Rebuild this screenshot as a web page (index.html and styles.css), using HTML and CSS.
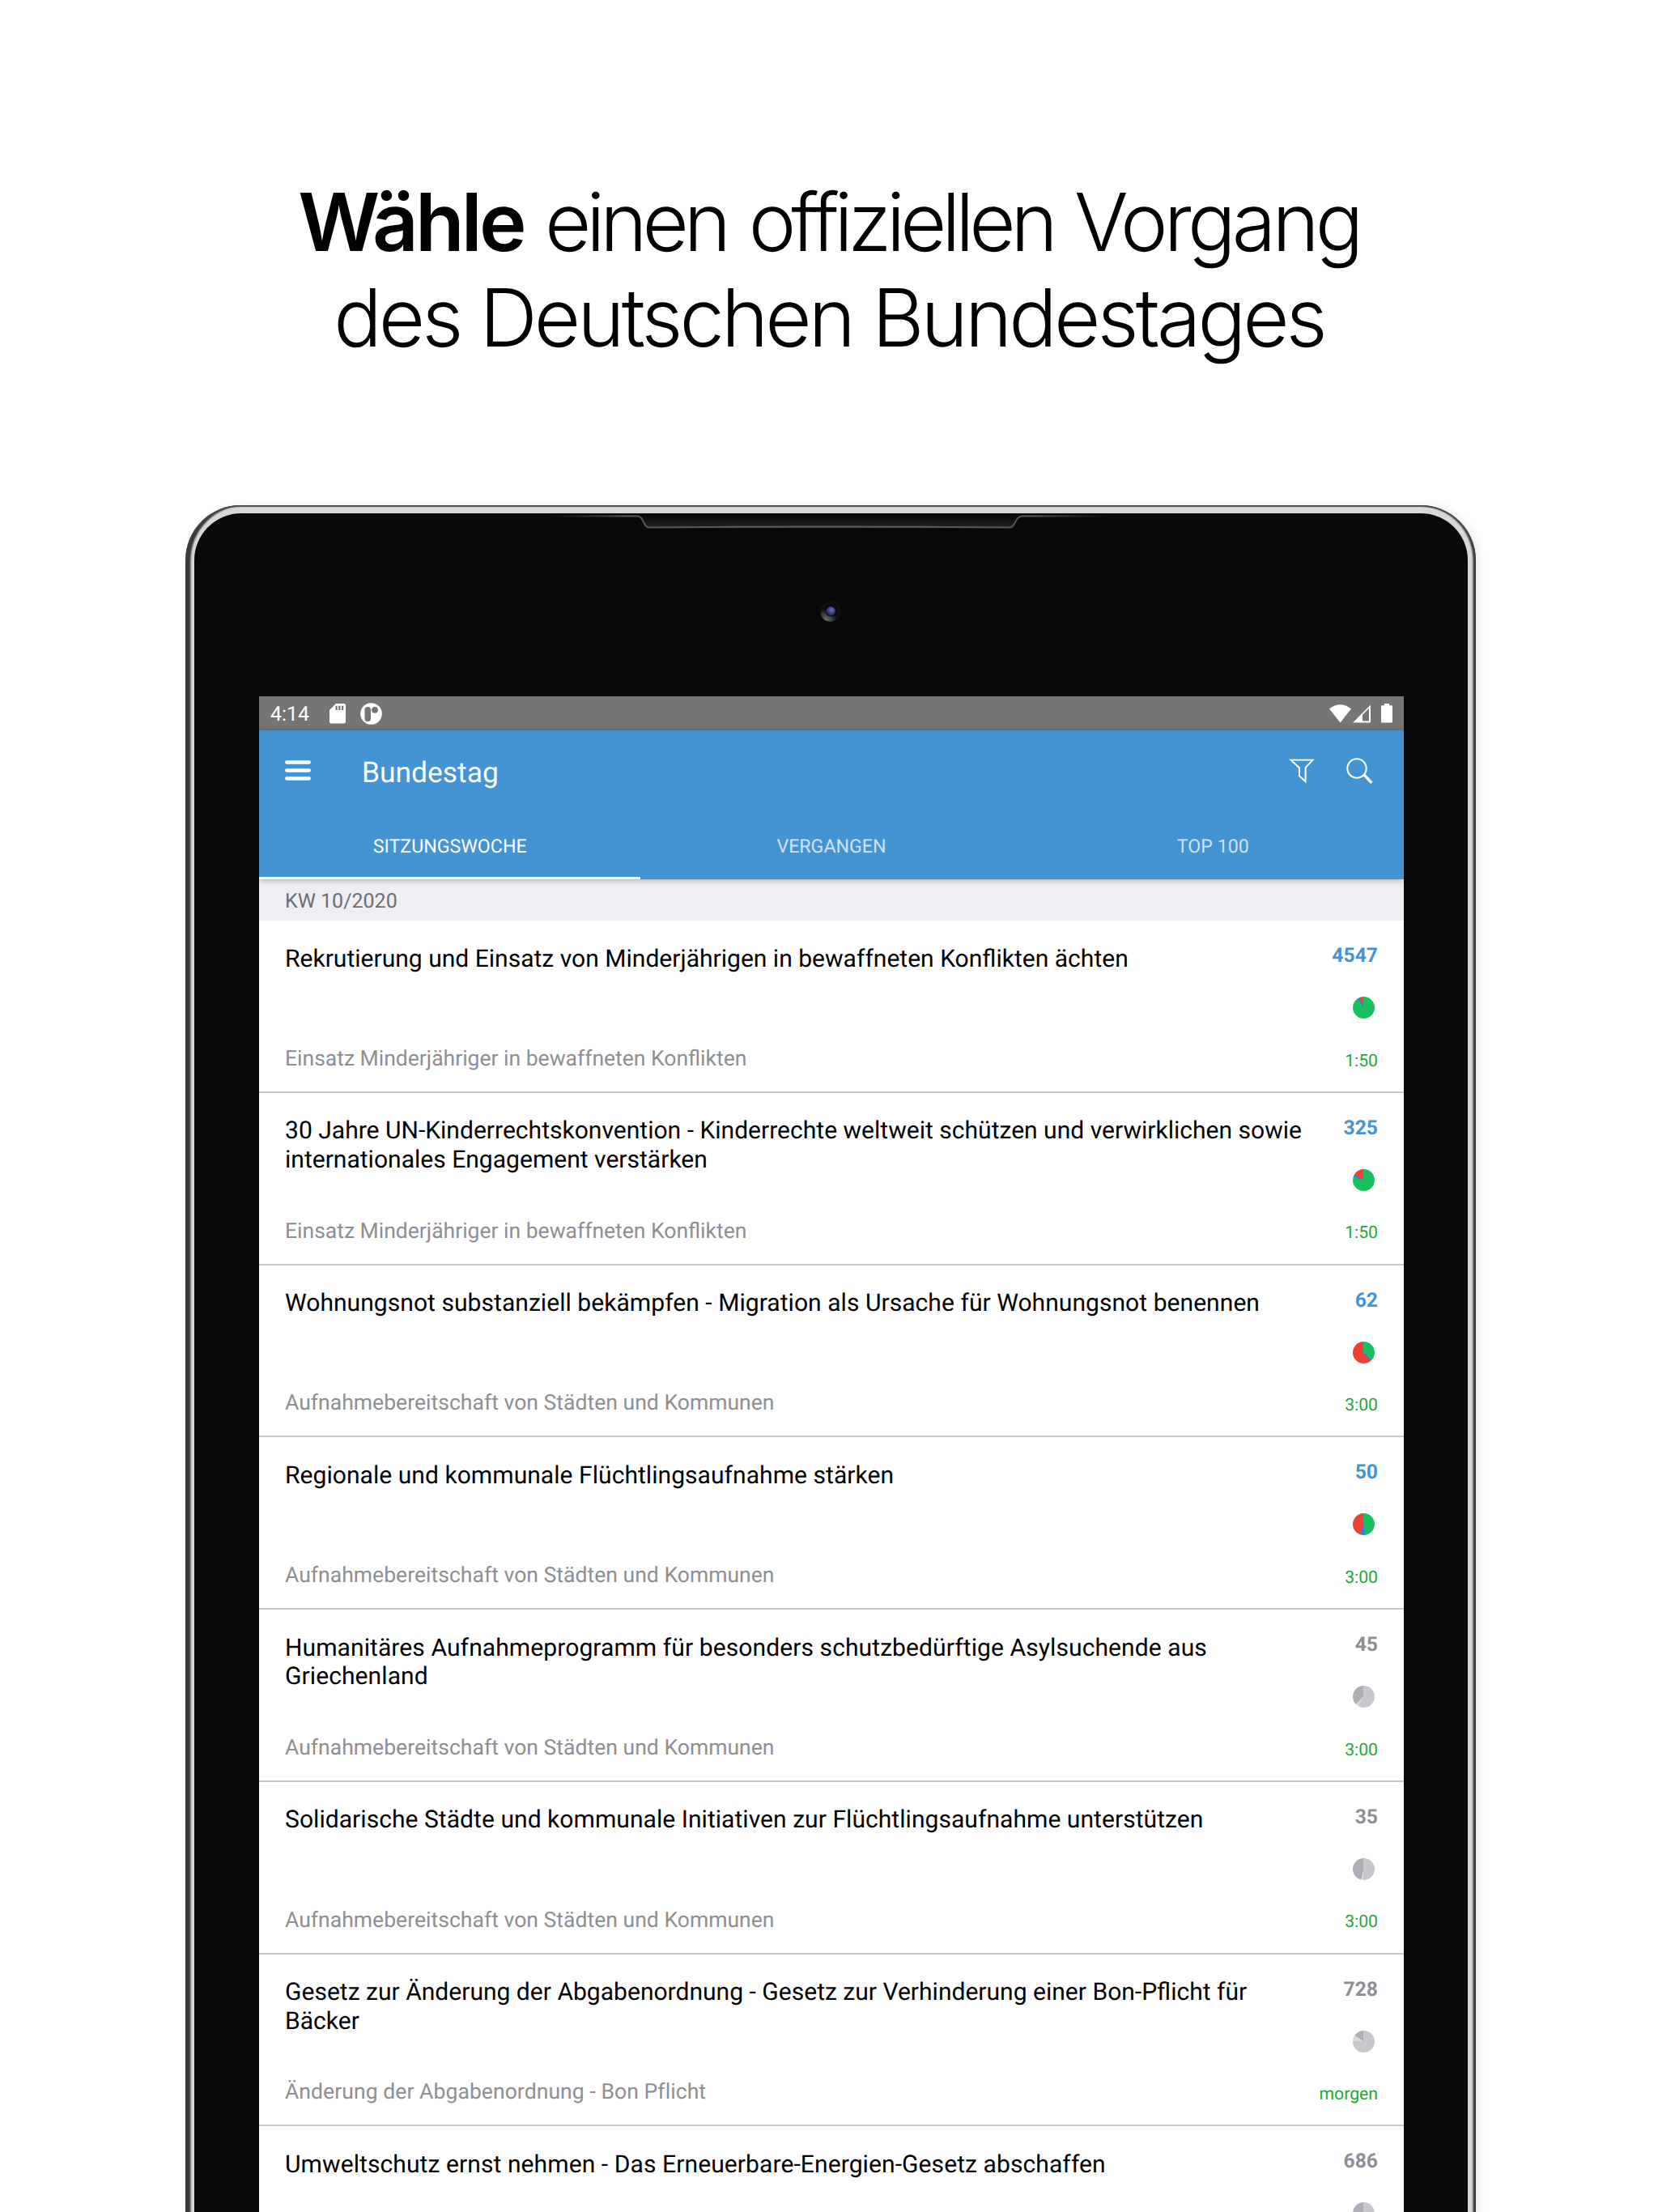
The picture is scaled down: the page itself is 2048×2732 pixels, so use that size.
FILE: index.html
```html
<!DOCTYPE html>
<html lang="de">
<head>
<meta charset="utf-8">
<title>Bundestag</title>
<link rel="stylesheet" href="styles.css">
</head>
<body>
<main class="page">
  <h1 class="headline">
    <span class="headline-line first"><strong>Wähle</strong> <span class="tight">einen offiziellen</span> <span class="snug">Vorgang</span></span>
    <span class="headline-line second">des Deutschen Bundestages</span>
  </h1>

  <div class="tablet">
    <div class="bezel">
      <div class="bezel-top">
        <svg class="speaker" width="720" height="24" viewBox="0 0 720 24">
          <defs>
            <linearGradient id="edge" x1="0" x2="1" y1="0" y2="0">
              <stop offset="0" stop-color="#0a0a0a"/><stop offset=".13" stop-color="#555"/>
              <stop offset=".5" stop-color="#606060"/><stop offset=".87" stop-color="#555"/><stop offset="1" stop-color="#0a0a0a"/>
            </linearGradient>
            <linearGradient id="slot" x1="0" x2="0" y1="0" y2="1">
              <stop offset="0" stop-color="#070707"/><stop offset="1" stop-color="#222"/>
            </linearGradient>
          </defs>
          <path d="M124 1C130 2 130 17 137 17H582C590 17 588 2 596 1Z" fill="url(#slot)"/>
          <path d="M20 2.4H122C131 2.4 129 16.6 137 16.6Q360 14.6 582 16.6C590 16.6 588 2.4 598 2.4H700" fill="none" stroke="url(#edge)" stroke-width="2"/>
        </svg>
        <svg class="camera" width="28" height="28" viewBox="0 0 28 28">
          <defs>
            <radialGradient id="ring" cx=".25" cy=".95" r=".55"><stop offset="0" stop-color="#777"/><stop offset="1" stop-color="#101010"/></radialGradient>
            <radialGradient id="lens" cx=".6" cy=".35" r=".7"><stop offset="0" stop-color="#7a68a8"/><stop offset=".5" stop-color="#3a4585"/><stop offset="1" stop-color="#10142c"/></radialGradient>
          </defs>
          <circle cx="14" cy="14" r="12.8" fill="url(#ring)"/>
          <circle cx="15" cy="12.500" r="8" fill="#0b0b0d"/>
          <circle cx="14" cy="14" r="5.8" fill="url(#lens)"/>
        </svg>
      </div>

      <div class="screen">
        <div class="status-bar">
          <span class="clock">4:14</span>
          <svg class="sd" width="20" height="25" viewBox="0 0 20 25"><path fill="#fff" fill-rule="evenodd" d="M8 0H18a2 2 0 0 1 2 2V22.500a2 2 0 0 1-2 2H2a2 2 0 0 1-2-2V8ZM7.500 2.800V8H9.700V2.800ZM11.300 2.800V8H13.500V2.800ZM15 2.800V8H17.200V2.800Z"/></svg>
          <svg class="badge" width="27" height="27" viewBox="0 0 27 27"><circle cx="13.500" cy="13.500" r="13.300" fill="#fff"/><rect x="5.500" y="5" width="7.500" height="18" rx="3.600" fill="#757575"/><circle cx="18" cy="8.800" r="3.900" fill="#757575"/></svg>
          <span class="spacer"></span>
          <svg class="wifi" width="27" height="23" viewBox="0 0 27 23"><path fill="#fff" d="M0 5.500Q13.500-4.800 27 5.500L13.500 22.500Z"/></svg>
          <svg class="signal" width="22" height="23" viewBox="0 0 22 23"><path fill="#fff" fill-rule="evenodd" d="M0 22.500L22 .5V22.500ZM12 12.800V20.500H20V4.800Z"/></svg>
          <svg class="battery" width="14" height="24" viewBox="0 0 14 24"><path fill="#fff" d="M4 0H10V2.300H12.600A1.400 1.400 0 0 1 14 3.700V22.200A1.400 1.400 0 0 1 12.600 23.600H1.400A1.400 1.400 0 0 1 0 22.200V3.700A1.400 1.400 0 0 1 1.400 2.300H4Z"/></svg>
        </div>

        <header class="app-header">
          <div class="toolbar">
            <svg class="menu" width="32" height="25" viewBox="0 0 32 25"><path d="M2.200 2.500H29.800M2.200 12.500H29.800M2.200 22.500H29.800" stroke="#fff" stroke-width="4.300" stroke-linecap="round"/></svg>
            <span class="app-title">Bundestag</span>
            <span class="spacer"></span>
            <svg class="filter" width="32" height="31" viewBox="0 0 32 31"><path d="M2.500 1.600H29.500L20.600 11.200V28.300L12.900 21.300V11.200Z" fill="none" stroke="#fff" stroke-width="1.900"/></svg>
            <svg class="search" width="33" height="33" viewBox="0 0 33 33"><circle cx="13" cy="13" r="11.700" fill="none" stroke="#fff" stroke-width="2"/><path d="M21.500 20.500L31.300 30.900" stroke="#fff" stroke-width="3.400"/></svg>
          </div>
          <nav class="tabs">
            <span class="tab active">SITZUNGSWOCHE</span>
            <span class="tab">VERGANGEN</span>
            <span class="tab">TOP 100</span>
          </nav>
        </header>

        <div class="section">KW 10/2020</div>

        <ul class="list">
          <li class="row">
            <div class="text"><p class="title">Rekrutierung und Einsatz von Minderjährigen in bewaffneten Konflikten ächten</p><p class="topic">Einsatz Minderjähriger in bewaffneten Konflikten</p></div>
            <div class="meta"><b class="count open">4547</b><i class="pie vivid" style="--a:325deg;--b:337deg"></i><span class="time">1:50</span></div>
          </li>
          <li class="row">
            <div class="text"><p class="title">30 Jahre UN-Kinderrechtskonvention - Kinderrechte weltweit schützen und verwirklichen sowie internationales Engagement verstärken</p><p class="topic">Einsatz Minderjähriger in bewaffneten Konflikten</p></div>
            <div class="meta"><b class="count open">325</b><i class="pie vivid" style="--a:287deg;--b:297deg"></i><span class="time">1:50</span></div>
          </li>
          <li class="row">
            <div class="text"><p class="title loose">Wohnungsnot substanziell bekämpfen - Migration als Ursache für Wohnungsnot benennen</p><p class="topic loose">Aufnahmebereitschaft von Städten und Kommunen</p></div>
            <div class="meta"><b class="count open">62</b><i class="pie vivid" style="--a:134deg;--b:141deg"></i><span class="time">3:00</span></div>
          </li>
          <li class="row">
            <div class="text"><p class="title loose">Regionale und kommunale Flüchtlingsaufnahme stärken</p><p class="topic loose">Aufnahmebereitschaft von Städten und Kommunen</p></div>
            <div class="meta"><b class="count open">50</b><i class="pie vivid" style="--a:172deg;--b:201deg"></i><span class="time">3:00</span></div>
          </li>
          <li class="row">
            <div class="text"><p class="title looser">Humanitäres Aufnahmeprogramm für besonders schutzbedürftige Asylsuchende aus Griechenland</p><p class="topic loose">Aufnahmebereitschaft von Städten und Kommunen</p></div>
            <div class="meta"><b class="count">45</b><i class="pie" style="--a:210deg;--b:225deg"></i><span class="time">3:00</span></div>
          </li>
          <li class="row">
            <div class="text"><p class="title loose">Solidarische Städte und kommunale Initiativen zur Flüchtlingsaufnahme unterstützen</p><p class="topic loose">Aufnahmebereitschaft von Städten und Kommunen</p></div>
            <div class="meta"><b class="count">35</b><i class="pie" style="--a:184deg;--b:195deg"></i><span class="time">3:00</span></div>
          </li>
          <li class="row">
            <div class="text"><p class="title">Gesetz zur Änderung der Abgabenordnung - Gesetz zur Verhinderung einer Bon-Pflicht für Bäcker</p><p class="topic looser">Änderung der Abgabenordnung - Bon Pflicht</p></div>
            <div class="meta"><b class="count">728</b><i class="pie" style="--a:272deg;--b:304deg"></i><span class="time">morgen</span></div>
          </li>
          <li class="row">
            <div class="text"><p class="title looser">Umweltschutz ernst nehmen - Das Erneuerbare-Energien-Gesetz abschaffen</p></div>
            <div class="meta"><b class="count">686</b><i class="pie" style="--a:190deg;--b:200deg"></i></div>
          </li>
        </ul>
      </div>
    </div>
  </div>
</main>
</body>
</html>
```
FILE: styles.css
```css
* { box-sizing: border-box; }
body, h1, p, ul { margin: 0; padding: 0; }
body {
  background: #fff;
  font-family: Roboto, sans-serif;
  text-rendering: geometricPrecision;
}

.page {
  width: 2048px;
  height: 2732px;
  overflow: hidden;
  display: flex;
  flex-direction: column;
  align-items: center;
}

.headline {
  height: 624px;
  padding-top: 215px;
  flex: none;
  display: flex;
  flex-direction: column;
  align-items: center;
  font: 300 99px/118px Inter, "Liberation Sans", sans-serif;
  color: #000;
  white-space: nowrap;
}
.headline strong { font-weight: 600; letter-spacing: -3.800px; }
.first { letter-spacing: -3.500px; word-spacing: 2px; }
.tight { letter-spacing: -6.100px; word-spacing: 6px; }
.snug { letter-spacing: -4.800px; }
.second { letter-spacing: -3.900px; }

.tablet {
  width: 1594px;
  height: 2200px;
  flex: none;
  margin-left: 4px;
  padding: 10px 10.500px 0 11px;
  border-radius: 68px;
  background: #d8d8d8;
  box-shadow:
    inset 0 2px 1px #4a4a4a,
    inset 6.500px 0 2px #3a3a3a,
    inset -3.500px 0 2px #3a3a3a,
    4px 0 10px rgba(0, 0, 0, .08);
}
.bezel {
  height: 100%;
  border-radius: 58px;
  background: #090909;
  padding: 0 79px 0 80px;
}
.bezel-top {
  height: 226px;
  display: flex;
  flex-direction: column;
  align-items: center;
}
.speaker { margin: 1px 4px 0 0; }
.camera { margin: 82px 2px 0 0; }

.screen {
  width: 1414px;
  height: 1900px;
  background: #fff;
  overflow: hidden;
}
.spacer { flex: 1; }

.status-bar {
  height: 42px;
  padding: 0 14px;
  display: flex;
  align-items: center;
  background: #757575;
  color: #fff;
  font-size: 24.900px;
}
.clock { width: 73px; padding-top: 3px; }
.badge { margin-left: 18px; }
.signal { margin-left: 2.500px; }
.battery { margin-left: 13px; }

.app-header {
  height: 184px;
  display: flex;
  flex-direction: column;
  background: #4493d3;
  color: #fff;
  position: relative;
  box-shadow: 0 1px 7px rgba(0, 0, 0, .3);
}
.toolbar {
  height: 100px;
  padding: 0 38px 0 32px;
  display: flex;
  align-items: center;
}
.menu { margin-bottom: 1px; }
.app-title {
  margin-left: 63px;
  padding-top: 4px;
  font-size: 35.400px;
}
.search { margin-left: 39px; }
.tabs { flex: 1; display: flex; }
.tab {
  flex: 1;
  padding-top: 29px;
  border-bottom: 3px solid transparent;
  text-align: center;
  font-size: 23.200px;
  line-height: 28px;
  color: rgba(255, 255, 255, .75);
}
.tab.active { color: #fff; border-color: #fff; }

.section {
  height: 51px;
  padding: 13px 32px 0;
  background: #efeef3;
  color: #6d6d72;
  font-size: 25px;
  line-height: 29px;
}

.list { list-style: none; }
.row {
  height: 212.750px;
  padding: 29.500px 32px 0;
  border-bottom: 2px solid #c8c7cc;
  display: flex;
  justify-content: space-between;
}
.text {
  width: 1264px;
  height: 156.300px;
  display: flex;
  flex-direction: column;
  justify-content: space-between;
}
.title { font-size: 30.050px; line-height: 35.500px; color: #000; }
.topic { font-size: 26.500px; line-height: 30px; color: #8e8e93; }
.loose { letter-spacing: .035px; }
.looser { letter-spacing: .075px; }
.meta {
  padding-top: .500px;
  display: flex;
  flex-direction: column;
  align-items: flex-end;
}
.count { font-size: 24.700px; line-height: 28px; color: #8e8e93; }
.count.open { color: #4493d3; }
.pie {
  --yes: #c7c7cc;
  --abstain: #d9d9dc;
  --no: #aeaeb6;
  flex: none;
  width: 27px;
  height: 27px;
  margin: 36px 4px 0 0;
  border-radius: 50%;
  background: conic-gradient(var(--yes) var(--a), var(--abstain) var(--a) var(--b), var(--no) var(--b));
}
.pie.vivid { --yes: #1abf60; --abstain: #2f80e8; --no: #ee4035; }
.time { margin-top: 39.500px; font-size: 21.200px; line-height: 26px; color: #1fa836; }
```
